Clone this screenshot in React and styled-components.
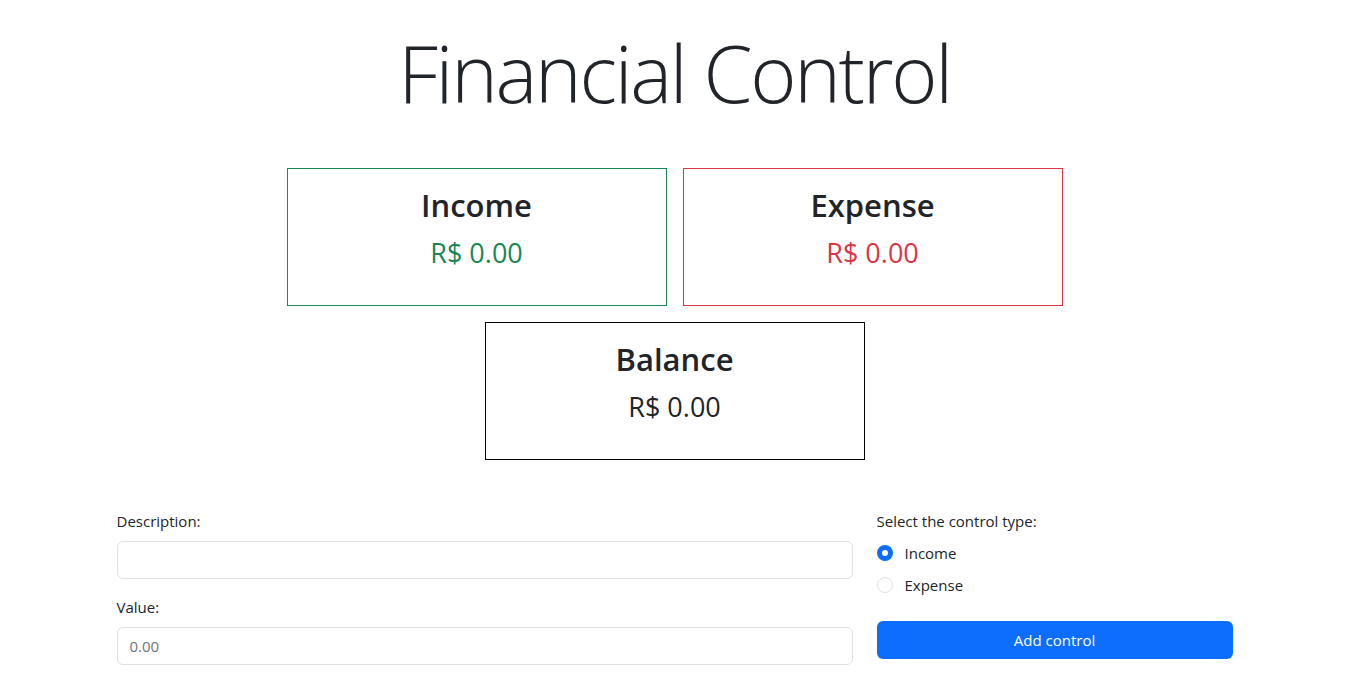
import React, { useState } from 'react';
import styled, { createGlobalStyle } from 'styled-components';

const GlobalStyle = createGlobalStyle`
    *, *::before, *::after { box-sizing: border-box; }
    body {
        margin: 0;
        padding-left: 2px;
        font-family: "Open Sans", "Noto Sans", sans-serif;
        font-size: 16px;
        line-height: 1.5;
        color: #212529;
        background: #fff;
    }
`

const colors = {
    income: '#198754',
    expense: '#dc3545',
    balance: '#212529',
}

const borders = {
    income: '#198754',
    expense: '#dc3545',
    balance: '#000',
}

const Container = styled.div`
    width: 1140px;
    margin: 0 auto;
    padding: 0 12px;
`

const Title = styled.h1`
    margin: 26px 0 0;
    text-align: center;
    font-size: 79px;
    font-weight: 300;
    line-height: 1.2;
    letter-spacing: -2.3px;
`

const Cards = styled.div`
    display: flex;
    flex-wrap: wrap;
    justify-content: center;
    gap: 16px;
    width: 776px;
    margin: 47px auto 0;
`

const Card = styled.div`
    width: 380px;
    height: 138px;
    padding-top: 18px;
    border: 1px solid ${p => borders[p.$kind]};
    text-align: center;
`

const CardTitle = styled.h2`
    margin: 0 0 13px;
    font-size: 31px;
    font-weight: 600;
    line-height: 1.2;
`

const CardValue = styled.div`
    font-size: 27px;
    line-height: 1.2;
    color: ${p => colors[p.$kind]};
`

const Form = styled.form`
    display: grid;
    grid-template-columns: 736px 356px;
    column-gap: 24px;
    margin-top: 49px;
`

const Column = styled.div`
    display: flex;
    flex-direction: column;
`

const Label = styled.label`
    display: block;
    font-size: 15px;
    line-height: 24px;
    margin-bottom: 8px;
`

const Input = styled.input`
    display: block;
    width: 100%;
    height: 38px;
    padding: 6px 12px;
    font-family: inherit;
    font-size: 15px;
    color: #212529;
    border: 1px solid #dee2e6;
    border-radius: 6px;
    margin-bottom: ${p => p.$last ? '0' : '16px'};
    outline: none;
    &::placeholder { color: #6c757d; }
`

const RadioRow = styled.label`
    display: flex;
    align-items: center;
    gap: 12px;
    height: 24px;
    margin-bottom: 8px;
    font-size: 15px;
    cursor: pointer;
`

const Radio = styled.span`
    width: 16px;
    height: 16px;
    border-radius: 50%;
    flex-shrink: 0;
    border: ${p => p.$checked ? '5px solid #0d6efd' : '1px solid #dee2e6'};
    background: #fff;
`

const Button = styled.button`
    margin-top: 16px;
    width: 100%;
    height: 38px;
    border: none;
    border-radius: 6px;
    background: #0d6efd;
    color: #fff;
    font-family: inherit;
    font-size: 15px;
    cursor: pointer;
`

const Summary = ({ kind, label }) => (
    <Card $kind={kind}>
        <CardTitle>{label}</CardTitle>
        <CardValue $kind={kind}>R$ 0.00</CardValue>
    </Card>
)

const App = () => {
    const [type, setType] = useState('income');

    return (
        <Container>
            <GlobalStyle />
            <Title>Financial Control</Title>
            <Cards>
                <Summary kind="income" label="Income" />
                <Summary kind="expense" label="Expense" />
                <Summary kind="balance" label="Balance" />
            </Cards>
            <Form onSubmit={e => e.preventDefault()}>
                <Column>
                    <Label>Description:</Label>
                    <Input type="text" />
                    <Label>Value:</Label>
                    <Input type="text" placeholder="0.00" $last />
                </Column>
                <Column>
                    <Label>Select the control type:</Label>
                    <RadioRow onClick={() => setType('income')}>
                        <Radio $checked={type === 'income'} />
                        Income
                    </RadioRow>
                    <RadioRow onClick={() => setType('expense')}>
                        <Radio $checked={type === 'expense'} />
                        Expense
                    </RadioRow>
                    <Button type="submit">Add control</Button>
                </Column>
            </Form>
        </Container>
    )
}

export default App;
